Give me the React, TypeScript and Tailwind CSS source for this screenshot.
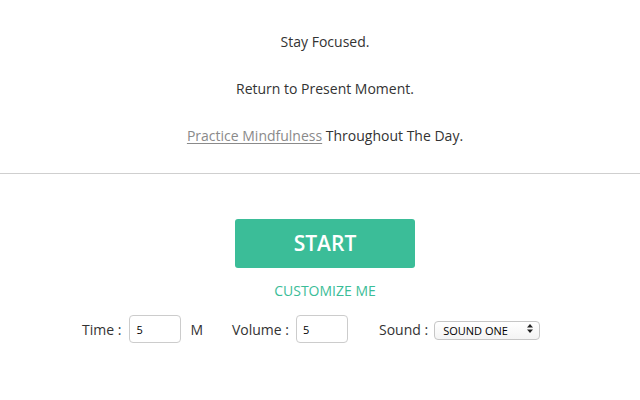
import { useState } from 'react';

const App = () => {
  const [time, setTime] = useState('5');
  const [volume, setVolume] = useState('5');
  const [sound, setSound] = useState('one');

  return (
    <div className="min-h-[400px] w-[640px] bg-white text-[14px] text-[#333] font-['Open_Sans',sans-serif]">
      <div className="pl-[10px] pt-[32px] text-center leading-5">
        <p>Stay Focused.</p>
        <p className="mt-[27px]">Return to Present Moment.</p>
        <p className="mt-[27px]">
          <a href="#" className="text-[#8a8a8a] underline underline-offset-2">
            Practice Mindfulness
          </a>{' '}
          Throughout The Day.
        </p>
      </div>

      <hr className="mt-[27px] border-0 border-t border-[#cfcfcf]" />

      <div className="flex flex-col items-center pl-[10px] pt-[45px]">
        <button className="h-[49px] w-[180px] rounded-[3px] bg-[#3bbd98] text-[21px] font-semibold text-white">
          START
        </button>
        <a href="#" className="mt-[13px] text-[14px] leading-5 text-[#3bbd98]">
          CUSTOMIZE ME
        </a>
      </div>

      <div className="mt-[14px] flex items-center pl-[82px] text-[14px]">
        <label className="flex items-center">
          Time :
          <input
            value={time}
            onChange={(e) => setTime(e.target.value)}
            className="ml-[8px] h-[28px] w-[52px] rounded-[4px] border border-[#cccccc] px-[6px] text-[11px] text-black outline-none"
          />
        </label>
        <span className="ml-[9px]">M</span>
        <label className="ml-[29px] flex items-center">
          Volume :
          <input
            value={volume}
            onChange={(e) => setVolume(e.target.value)}
            className="ml-[7px] h-[28px] w-[52px] rounded-[4px] border border-[#cccccc] px-[6px] text-[11px] text-black outline-none"
          />
        </label>
        <label className="ml-[31px] flex items-center">
          Sound :
          <span className="relative ml-[6px]">
            <select
              value={sound}
              onChange={(e) => setSound(e.target.value)}
              className="h-[19px] w-[106px] appearance-none rounded-[4px] border border-[#c6c6c6] bg-gradient-to-b from-white to-[#f4f4f4] pl-[8px] text-[11px] leading-[17px] text-black outline-none"
            >
              <option value="one">SOUND ONE</option>
              <option value="two">SOUND TWO</option>
              <option value="three">SOUND THREE</option>
            </select>
            <svg
              className="pointer-events-none absolute right-[7px] top-[5px] h-[9px] w-[6px]"
              viewBox="0 0 6 9"
              fill="#222"
            >
              <path d="M3 0L6 3.5H0z" />
              <path d="M3 9L0 5.5H6z" />
            </svg>
          </span>
        </label>
      </div>
    </div>
  );
};

export default App;
